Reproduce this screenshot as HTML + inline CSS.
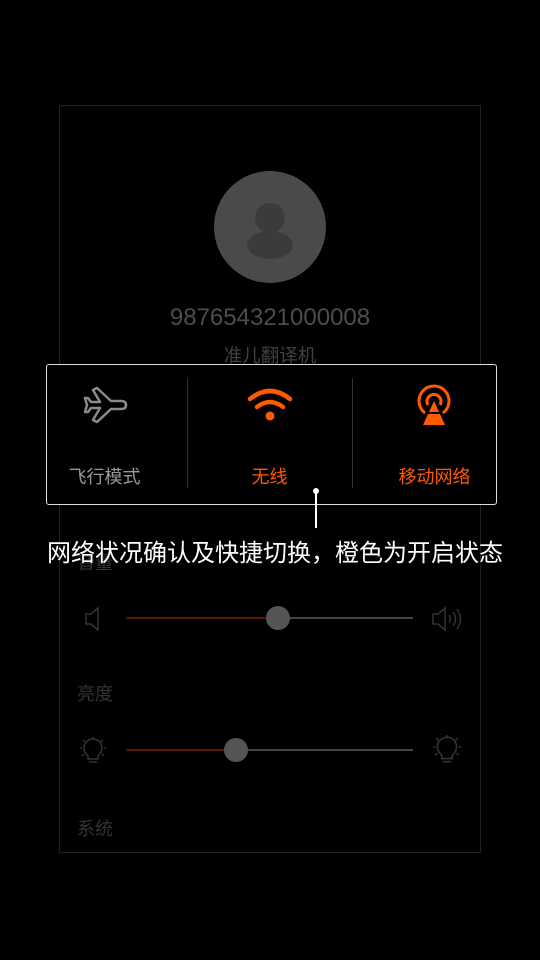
<!DOCTYPE html>
<html><head><meta charset="utf-8"><style>
body{margin:0;width:540px;height:960px;background:#000;position:relative;overflow:hidden;font-family:"Liberation Sans","Noto Sans CJK SC",sans-serif}
.a{position:absolute}
.lbl{position:absolute;left:77px;font-size:18px;color:#333;line-height:20px}
.track{position:absolute;height:2px;background:#444}
.knob{position:absolute;width:24px;height:24px;border-radius:50%;background:#555}
</style></head><body>
<div class="a" style="left:59px;top:105px;width:420px;height:746px;border:1px solid #222"></div>
<div class="a" style="left:214px;top:171px;width:112px;height:112px;border-radius:50%;background:#4a4a4a;overflow:hidden">
<div class="a" style="left:41px;top:32px;width:30px;height:30px;border-radius:50%;background:#3b3b3b"></div>
<div class="a" style="left:33px;top:60px;width:46px;height:28px;border-radius:50%;background:#3b3b3b"></div>
</div>
<div class="a" style="left:0;width:540px;top:304px;text-align:center;font-size:24px;color:#4d4d4d">987654321000008</div>
<div class="a" style="left:0;width:540px;top:342px;text-align:center;font-size:18.5px;color:#404040">准儿翻译机</div>

<div class="lbl" style="top:553px">音量</div>
<div class="lbl" style="top:684px">亮度</div>
<div class="lbl" style="top:819px">系统</div>

<svg class="a" style="left:84px;top:606px" width="20" height="26" viewBox="0 0 20 26"><path d="M2 8h5l7-6v22l-7-6H2z" fill="none" stroke="#333" stroke-width="1.5"/></svg>
<div class="track" style="left:126px;top:617px;width:287px"></div>
<div class="track" style="left:126px;top:617px;width:152px;background:#5a1800"></div>
<div class="knob" style="left:266px;top:606px"></div>
<svg class="a" style="left:431px;top:606px" width="32" height="26" viewBox="0 0 32 26"><path d="M2 8h5l7-6v22l-7-6H2z" fill="none" stroke="#333" stroke-width="1.5"/><path d="M18 9q3 4 0 8M22 6q5 7 0 14M26 3q7 10 0 20" fill="none" stroke="#333" stroke-width="1.5"/></svg>

<svg class="a" style="left:79px;top:736px" width="28" height="30" viewBox="0 0 28 30"><g fill="none" stroke="#333" stroke-width="1.5"><path d="M9 20q-4-4-4-8a9 9 0 0 1 18 0q0 4-4 8v3H9z"/><path d="M10 26h8M14 1v3M4 4l2 2M24 4l-2 2M1 12h2M25 12h2M3 20l2-2M25 20l-2-2"/></g></svg>
<div class="track" style="left:126px;top:749px;width:287px"></div>
<div class="track" style="left:126px;top:749px;width:110px;background:#5a1800"></div>
<div class="knob" style="left:224px;top:738px"></div>
<svg class="a" style="left:432px;top:734px" width="30" height="32" viewBox="0 0 28 30"><g fill="none" stroke="#333" stroke-width="1.5"><path d="M9 20q-4-4-4-8a9 9 0 0 1 18 0q0 4-4 8v3H9z"/><path d="M10 26h8M14 1v3M4 4l2 2M24 4l-2 2M1 12h2M25 12h2M3 20l2-2M25 20l-2-2"/></g></svg>

<div class="a" style="left:46px;top:364px;width:449px;height:139px;border:1px solid #ddd;border-radius:3px;background:#000"></div>
<div class="a" style="left:187px;top:378px;width:1px;height:110px;background:#333"></div>
<div class="a" style="left:352px;top:378px;width:1px;height:110px;background:#333"></div>
<svg class="a" style="left:80px;top:382px" width="50" height="48" viewBox="0 0 50 48"><path d="M13 8l4-2 14 13h10q5 0 5 4t-5 4H31L17 40l-4-2 7-12h-9l-3 4H5l2-7-2-7h3l3 4h9z" fill="none" stroke="#8a8a8a" stroke-width="2.5" stroke-linejoin="round"/></svg>
<svg class="a" style="left:247px;top:385px" width="46" height="40" viewBox="0 0 46 40"><g fill="none" stroke="#ff5a00" stroke-width="4.5" stroke-linecap="round"><path d="M3 14q20-16 40 0"/><path d="M10 22q13-10 26 0"/></g><circle cx="23" cy="31" r="4.5" fill="#ff5a00"/></svg>
<svg class="a" style="left:414px;top:383px" width="40" height="44" viewBox="0 0 40 44"><g fill="none" stroke="#ff5a00" stroke-width="3"><path d="M11 30a15 15 0 1 1 18 0"/><path d="M14 22a7 7 0 1 1 12 0"/></g><path d="M20 18L31 42H9z" fill="#ff5a00"/><rect x="12" y="29" width="16" height="2" fill="#000"/></svg>
<div class="a" style="left:34px;width:141px;top:463px;text-align:center;font-size:18px;color:#999">飞行模式</div>
<div class="a" style="left:187px;width:165px;top:463px;text-align:center;font-size:18px;color:#ff5a00">无线</div>
<div class="a" style="left:352px;width:165px;top:463px;text-align:center;font-size:18px;color:#ff5a00">移动网络</div>
<div class="a" style="left:313px;top:488px;width:6px;height:6px;border-radius:50%;background:#fff"></div>
<div class="a" style="left:315px;top:491px;width:2px;height:37px;background:#fff"></div>
<div class="a" style="left:47px;top:533px;font-size:24px;color:#fff;white-space:nowrap">网络状况确认及快捷切换，橙色为开启状态</div>
</body></html>
